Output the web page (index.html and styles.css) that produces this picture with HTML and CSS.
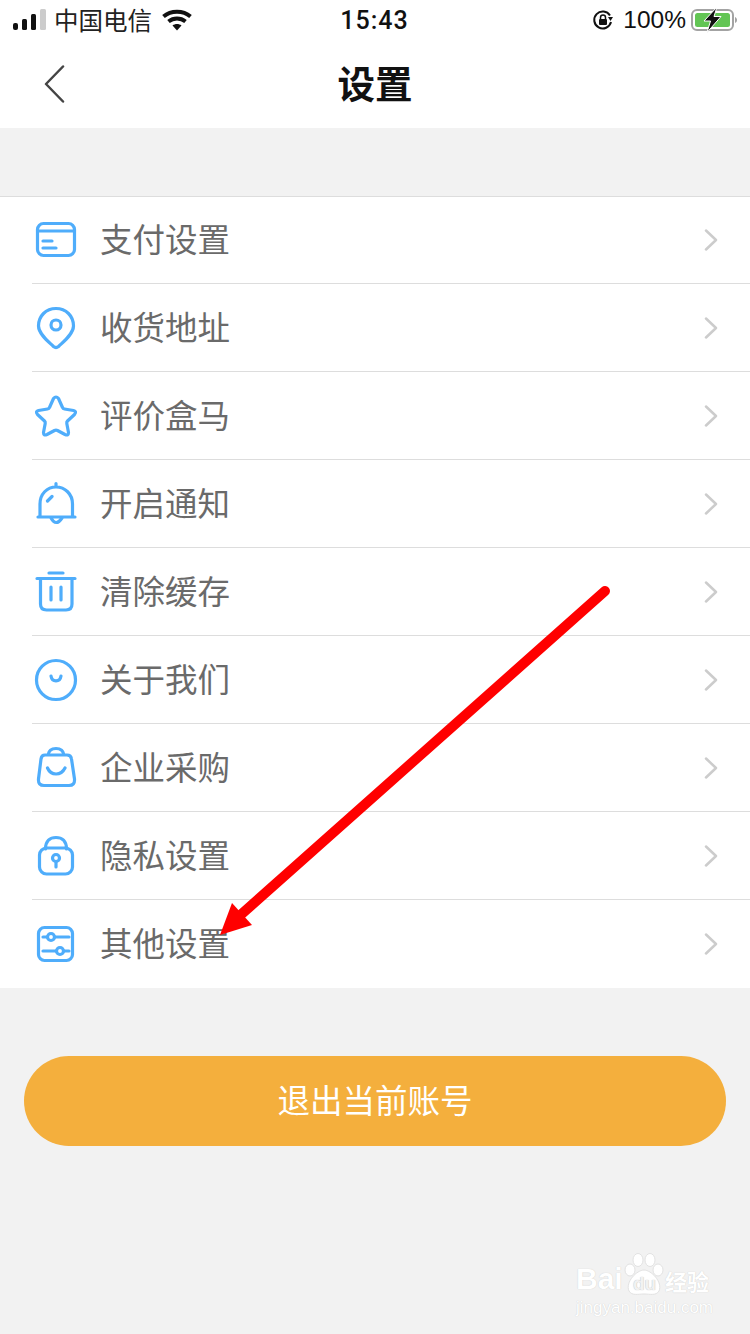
FILE: index.html
```html
<!DOCTYPE html>
<html lang="zh-CN">
<head>
  <meta charset="UTF-8" />
  <title>设置</title>
  <link rel="stylesheet" href="styles.css">
</head>
<body>
<div class="page">

  <div class="header">
    <div class="status">
      <div class="status-left">
        <svg class="signal" width="34" height="22" viewBox="0 0 34 22">
          <rect x="0" y="14" width="5" height="7" rx="2" fill="#111"/>
          <rect x="9" y="10" width="5" height="11" rx="1.5" fill="#111"/>
          <rect x="18" y="5" width="5" height="16" rx="1.5" fill="#111"/>
          <rect x="27" y="0" width="6" height="21" rx="1.5" fill="#ccc"/>
        </svg>
        <span class="carrier">中国电信</span>
        <svg class="wifi" width="30" height="22" viewBox="0 0 30 22" fill="none" stroke="#111" stroke-width="4">
          <path d="M1.5 7.5C9 1 21 1 28.5 7.5"/>
          <path d="M6.5 12.5C11.5 8.5 18.5 8.5 23.5 12.5"/>
          <path d="M15 21.5L10.5 16.5C13 14.5 17 14.5 19.5 16.5Z" fill="#111" stroke="none"/>
        </svg>
      </div>
      <div class="clock">15:43</div>
      <div class="status-right">
        <svg width="22" height="22" viewBox="0 0 22 22" fill="none">
          <path d="M18 6.5A8.5 8.5 0 1 0 19 13" stroke="#111" stroke-width="2"/>
          <path d="M16 8H21L18.5 12Z" fill="#111"/>
          <rect x="7" y="10" width="8" height="6" rx="1" fill="#111"/>
          <path d="M8.5 10V8.5A2.5 2.5 0 0 1 13.5 8.5V10" stroke="#111" stroke-width="1.5"/>
        </svg>
        <span class="percent">100%</span>
        <svg class="battery" width="48" height="26" viewBox="0 0 48 26" fill="none">
          <rect x="3" y="3" width="41" height="20" rx="5" stroke="#a3a3a3" stroke-width="2"/>
          <rect x="6" y="6" width="35" height="14" rx="2.5" fill="#62c554"/>
          <path d="M46 10V16C47.2 15.5 48 14.5 48 13S47.2 10.5 46 10Z" fill="#a3a3a3"/>
          <path d="M28 0L15 14H21.5L18 25.5L32 9.5H25Z" fill="#111" stroke="#fff" stroke-width="1"/>
        </svg>
      </div>
    </div>
    <div class="nav">
      <svg class="back" width="22" height="38" viewBox="0 0 22 38" fill="none" stroke="#444" stroke-width="2.5" stroke-linecap="round" stroke-linejoin="round">
        <path d="M19 1.5L2 19L19 36.5"/>
      </svg>
      <h1 class="title">设置</h1>
    </div>
  </div>

  <ul class="menu">
    <li class="row">
      <svg class="icon" viewBox="0 0 48 48"><rect x="5.5" y="7.5" width="37" height="32" rx="6"/><path d="M5.5 15H42.5M11 25H20M11 32H24"/></svg>
      <span class="label">支付设置</span>
      <svg class="arrow" width="14" height="22" viewBox="0 0 14 22"><path d="M2 1.5L12 11L2 20.5"/></svg>
    </li>
    <li class="row">
      <svg class="icon" viewBox="0 0 48 48"><path d="M24 4.5C14 4.5 6.5 12 6.5 22C6.5 30 17 38 21.5 42.5Q24 44.5 26.5 42.5C31 38 41.5 30 41.5 22C41.5 12 34 4.5 24 4.5Z"/><circle cx="24" cy="21" r="5"/></svg>
      <span class="label">收货地址</span>
      <svg class="arrow" width="14" height="22" viewBox="0 0 14 22"><path d="M2 1.5L12 11L2 20.5"/></svg>
    </li>
    <li class="row">
      <svg class="icon" viewBox="0 0 48 48"><path d="M21.5 6.5Q24 3.5 26.5 6.5L30.5 15.5Q31 16.8 32.5 17L41.5 18.5Q45 19.5 42.5 22.5L35.5 29Q34.5 30 34.8 31.5L36.5 40.5Q36.5 44 33 42.5L25.5 38.5Q24 37.8 22.5 38.5L15 42.5Q11.5 44 11.5 40.5L13.2 31.5Q13.5 30 12.5 29L5.5 22.5Q3 19.5 6.5 18.5L15.5 17Q17 16.8 17.5 15.5Z"/></svg>
      <span class="label">评价盒马</span>
      <svg class="arrow" width="14" height="22" viewBox="0 0 14 22"><path d="M2 1.5L12 11L2 20.5"/></svg>
    </li>
    <li class="row">
      <svg class="icon" viewBox="0 0 48 48"><path d="M8 37V24C8 14 15 7 24 7C33 7 40.5 14 40.5 24V37M6 37H43M24 3.5V7M19 38Q24 47 30 38M15.5 21L20 16.5"/></svg>
      <span class="label">开启通知</span>
      <svg class="arrow" width="14" height="22" viewBox="0 0 14 22"><path d="M2 1.5L12 11L2 20.5"/></svg>
    </li>
    <li class="row">
      <svg class="icon" viewBox="0 0 48 48"><path d="M17 5H31M5 10.5H43M8.5 10.5V36Q8.5 42 14.5 42H34Q40 42 40 36V10.5M19 19V32M29 19V32"/></svg>
      <span class="label">清除缓存</span>
      <svg class="arrow" width="14" height="22" viewBox="0 0 14 22"><path d="M2 1.5L12 11L2 20.5"/></svg>
    </li>
    <li class="row">
      <svg class="icon" viewBox="0 0 48 48"><circle cx="24" cy="24" r="19.5"/><path d="M19 20C20 26.5 28 26.5 29 20"/></svg>
      <span class="label">关于我们</span>
      <svg class="arrow" width="14" height="22" viewBox="0 0 14 22"><path d="M2 1.5L12 11L2 20.5"/></svg>
    </li>
    <li class="row">
      <svg class="icon" viewBox="0 0 48 48"><path d="M13 11H35Q39 11 39.5 15L42.5 35Q43 41.5 37 41.5H12Q6 41.5 6.5 35L9 15Q9.5 11 13 11ZM16 11Q17 4.5 24 4.5Q31 4.5 32 11M15.5 24C19 32 29 32 33 24"/></svg>
      <span class="label">企业采购</span>
      <svg class="arrow" width="14" height="22" viewBox="0 0 14 22"><path d="M2 1.5L12 11L2 20.5"/></svg>
    </li>
    <li class="row">
      <svg class="icon" viewBox="0 0 48 48"><rect x="7.5" y="16" width="33" height="26" rx="7"/><path d="M13.5 17C13.5 9 18 5.5 24 5.5C30 5.5 34.5 9 34.5 17M24 29.5V35"/><circle cx="24" cy="26" r="3.5"/></svg>
      <span class="label">隐私设置</span>
      <svg class="arrow" width="14" height="22" viewBox="0 0 14 22"><path d="M2 1.5L12 11L2 20.5"/></svg>
    </li>
    <li class="row">
      <svg class="icon" viewBox="0 0 48 48"><rect x="6.5" y="7.5" width="34" height="33" rx="6"/><path d="M11 17H37M11 31H37"/><circle class="knob" cx="19" cy="17" r="3.5"/><circle class="knob" cx="28" cy="31" r="3.5"/></svg>
      <span class="label">其他设置</span>
      <svg class="arrow" width="14" height="22" viewBox="0 0 14 22"><path d="M2 1.5L12 11L2 20.5"/></svg>
    </li>
  </ul>

  <div class="logout">退出当前账号</div>

  <!-- annotation drawn over the screenshot -->
  <svg class="pointer" width="750" height="1334" viewBox="0 0 750 1334">
    <path d="M605 591L236 919" stroke="#f00" stroke-width="10" stroke-linecap="round"/>
    <path d="M220 935L232 903L252 925Z" fill="#f00"/>
  </svg>

  <div class="watermark">
    <div class="wm-top">
      <span class="wm-bai">Bai</span>
      <div class="wm-paw">
        <svg width="42" height="44" viewBox="0 0 42 44" fill="#fff" stroke="#e2e2e2" stroke-width="1">
          <ellipse cx="7" cy="17" rx="5" ry="6"/>
          <ellipse cx="15" cy="7" rx="5" ry="6.5"/>
          <ellipse cx="27" cy="7" rx="5" ry="6.5"/>
          <ellipse cx="35" cy="17" rx="5" ry="6"/>
          <path d="M21 17C28 17 40 29 36 38C33 43 27 41 21 41C15 41 9 43 6 38C2 29 14 17 21 17Z"/>
        </svg>
        <span class="wm-du">du</span>
      </div>
      <span class="wm-jy">经验</span>
    </div>
    <div class="wm-url">jingyan.baidu.com</div>
  </div>

</div>
</body>
</html>
```

FILE: styles.css
```css
* {
  box-sizing: border-box;
}
body {
  margin: 0;
  font-family: "Noto Sans CJK SC", "Noto Sans", sans-serif;
  background-color: #f2f2f2;
  color: #111;
}
.page {
  position: relative;
  width: 750px;
  height: 1334px;
  overflow: hidden;
}

.header {
  height: 128px;
  background: #fff;
}
.status {
  display: grid;
  grid-template-columns: 1fr auto 1fr;
  align-items: center;
  height: 40px;
  padding: 0 13px 0 13px;
}
.status-left, .status-right {
  display: flex;
  align-items: center;
}
.status-right {
  justify-content: flex-end;
}
.carrier {
  margin-left: 7px;
  font-size: 24.5px;
  line-height: 40px;
  color: #222;
}
.wifi {
  margin-left: 10px;
}
.clock {
  margin-right: 1px;
  font-family: Roboto, sans-serif;
  font-size: 25px;
  font-weight: 500;
  letter-spacing: 1px;
}
.percent {
  margin: 0 3px 0 9px;
  font-family: "Liberation Sans", sans-serif;
  font-size: 24.5px;
}
.nav {
  position: relative;
  display: flex;
  align-items: center;
  justify-content: center;
  height: 88px;
  padding-bottom: 6px;
}
.back {
  position: absolute;
  left: 44px;
  top: 25px;
}
.title {
  margin: 0;
  font-size: 37.5px;
  font-weight: 700;
}

.menu {
  list-style: none;
  margin: 68px 0 0 0;
  padding: 0 0 0 32px;
  background: #fff;
  border-top: 1px solid #ddd;
}
.row {
  display: flex;
  align-items: center;
  height: 88px;
  padding-right: 32px;
  border-bottom: 1px solid #ddd;
}
.row:first-child {
  height: 87px;
}
.row:last-child {
  border-bottom: none;
}
.icon {
  width: 48px;
  height: 48px;
  fill: none;
  stroke: #4fadfb;
  stroke-width: 3.2;
  stroke-linecap: round;
  stroke-linejoin: round;
}
.icon .knob {
  fill: #fff;
}
.label {
  flex: 1;
  margin-left: 20px;
  padding-bottom: 5px;
  font-size: 32.5px;
  color: #6a6a6a;
}
.arrow {
  fill: none;
  stroke: #ccc;
  stroke-width: 2.5;
  stroke-linecap: round;
  stroke-linejoin: round;
}

.logout {
  margin: 68px 24px 0 24px;
  height: 90px;
  line-height: 86px;
  border-radius: 45px;
  background-color: #f4af3d;
  color: #fff;
  font-size: 32.5px;
  text-align: center;
}

.pointer {
  position: absolute;
  left: 0;
  top: 0;
}

.watermark {
  position: absolute;
  left: 576px;
  top: 1253px;
  width: 134px;
  color: #fff;
  text-shadow: 0 0 1px #c4c4c4;
}
.wm-top {
  display: flex;
  align-items: flex-end;
  height: 44px;
}
.wm-bai {
  width: 47px;
  font-family: "Liberation Sans", sans-serif;
  font-size: 30px;
  font-weight: 700;
  line-height: 36px;
}
.wm-paw {
  position: relative;
  width: 42px;
  height: 44px;
}
.wm-du {
  position: absolute;
  left: 10px;
  top: 20px;
  font-family: "Liberation Sans", sans-serif;
  font-size: 19px;
  font-weight: 700;
  line-height: 22px;
  color: #f2f2f2;
  text-shadow: 0 0 1px #aaa;
}
.wm-jy {
  font-size: 22px;
  font-weight: 700;
  line-height: 34px;
  white-space: nowrap;
}
.wm-url {
  margin-top: 2px;
  font-family: "Liberation Sans", sans-serif;
  font-size: 17px;
  line-height: 18px;
  white-space: nowrap;
}
```
